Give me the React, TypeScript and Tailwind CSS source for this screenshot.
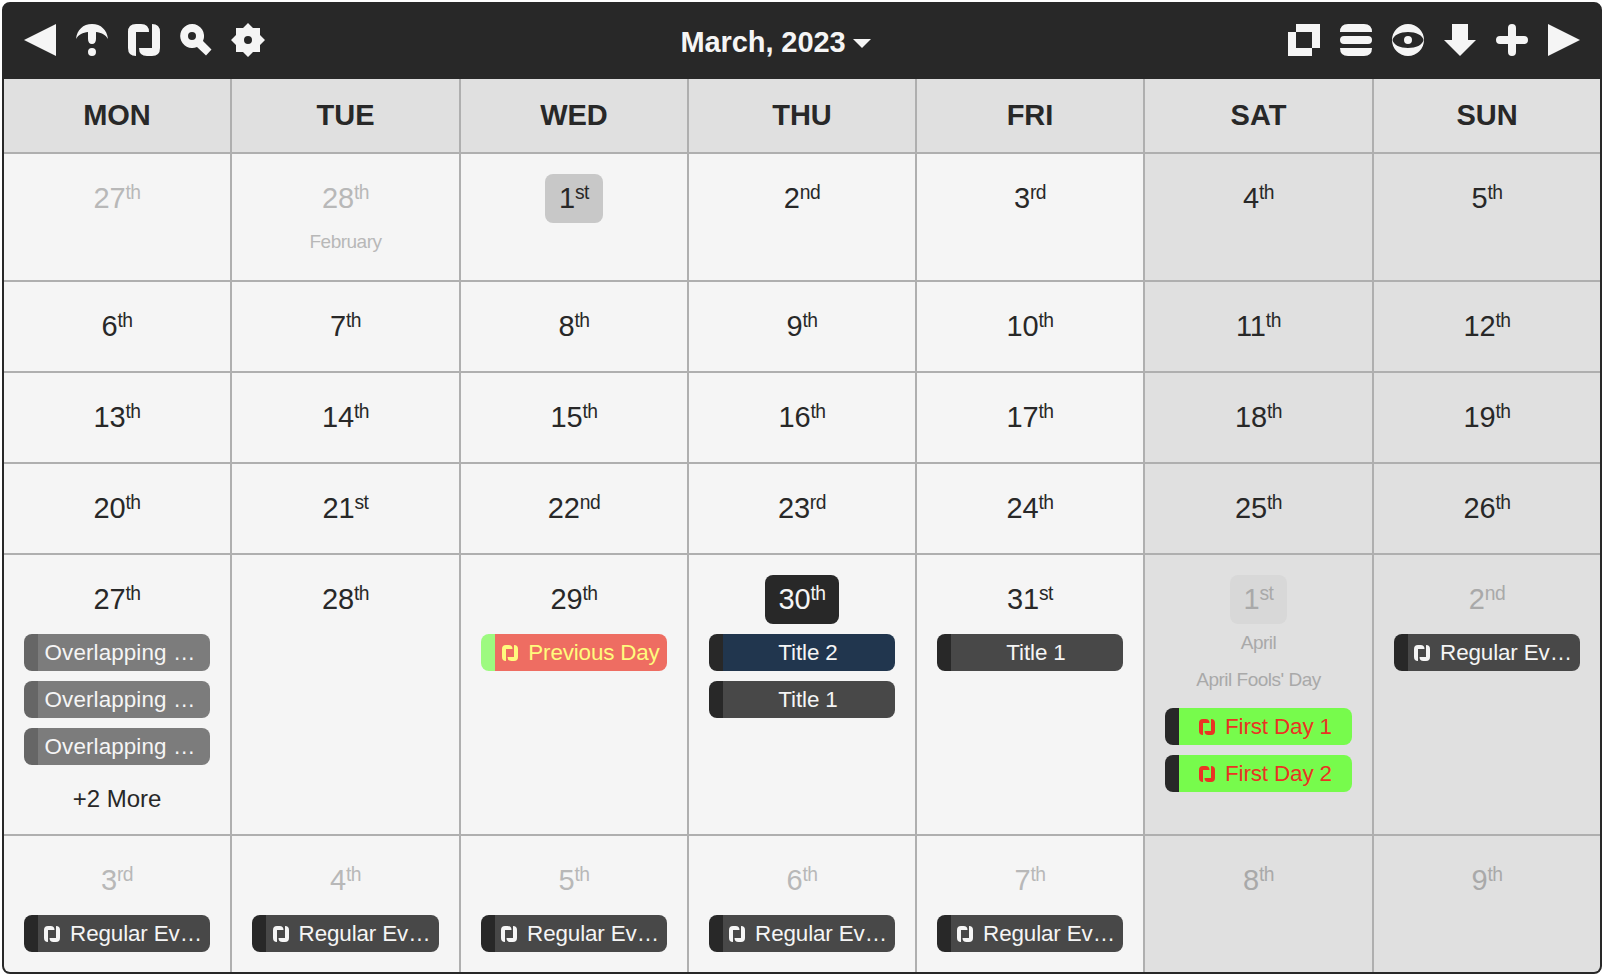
import type { ReactNode } from "react";

const BACK = "M32 0V32L0 16Z";
const FORWARD = "M0 0V32L32 16Z";
const SYNC =
  "M8 0H13Q21 0 21 8H8V32Q0 32 0 24V8Q0 0 8 0ZM24 32H19Q11 32 11 24H24V0Q32 0 32 8V24Q32 32 24 32Z";
const COPY = "M8 0H32V24H24V8H8ZM0 8H8V24H24V32H0Z";
const MENU =
  "M8 0H24Q32 0 32 8H0Q0 0 8 0ZM4 12H28A4 4 0 0 1 28 20H4A4 4 0 0 1 4 12ZM0 24H32Q32 32 24 32H8Q0 32 0 24Z";
const DOWN = "M8 0H24V16H32L16 32L0 16H8Z";
const PLUS =
  "M12 4A4 4 0 0 1 20 4V12H28A4 4 0 0 1 28 20H20V28A4 4 0 0 1 12 28V20H4A4 4 0 0 1 4 12H12Z";
const TODAY =
  "M0 15C1 6 7 0 16 0S31 6 32 15C29.500 10.500 25 8.500 20 8V15C20 18 18.500 20 16 20S12 18 12 15V8C7 8.500 2.500 10.500 0 15ZM16 24A4 4 0 1 1 16 32A4 4 0 1 1 16 24Z";
const SEARCH =
  "M12 0A12 12 0 0 1 23 17L31.500 25.500L26 31.500L17 23A12 12 0 1 1 12 0ZM12 8A4 4 0 1 0 12 16A4 4 0 1 0 12 8Z";
const GEAR =
  "M4 4H11L16 -1L21 4H28V11L33 16L28 21V28H21L16 33L11 28H4V21L-1 16L4 11ZM16 12A4 4 0 1 0 16 20A4 4 0 1 0 16 12Z";
const EYE =
  "M16 0A16 16 0 1 1 16 32A16 16 0 1 1 16 0ZM0.500 16C1.500 11 8 8 16 8S30.500 11 31.500 16C30.500 21 24 24 16 24S1.500 21 0.500 16ZM16 12A4 4 0 1 1 16 20A4 4 0 1 1 16 12Z";

function Icon({ d, className = "size-8" }: { d: string; className?: string }) {
  return (
    <svg viewBox="0 0 32 32" className={`${className} shrink-0 overflow-visible`} fill="currentColor" fillRule="evenodd">
      <path d={d} />
    </svg>
  );
}

type Kind = "overlap" | "regular" | "title2" | "previous" | "first";
type Event = { kind: Kind; text: string; sync?: boolean };
type Day = {
  n: number;
  muted?: boolean;
  badge?: "today" | "first" | "firstMuted";
  notes?: string[];
  events?: Event[];
  more?: string;
};

const kindStyle: Record<Kind, string> = {
  overlap: "bg-[#7c7c7c] border-[#666666] text-[#f5f5f5] pr-2 tracking-[0.120px]",
  regular: "bg-[#484848] border-[#282828] text-[#f5f5f5] pr-0.5 tracking-[-0.120px]",
  title2: "bg-[#21364e] border-[#282828] text-[#f5f5f5] pr-0.5 tracking-[-0.120px]",
  previous: "bg-[#ee6d62] border-[#9dfa80] text-[#fffb7d] tracking-[-0.150px]",
  first: "bg-[#77fb4c] border-[#282828] text-[#ea3323] tracking-[-0.120px]",
};

const badgeStyle = {
  today: "bg-[#282828] text-[#f5f5f5]",
  first: "bg-[#c8c8c8]",
  firstMuted: "bg-[#d8d8d8]",
};

function suffix(n: number) {
  if (n > 10 && n < 14) return "th";
  return ["th", "st", "nd", "rd"][n % 10] ?? "th";
}

function EventBar({ kind, text, sync }: Event) {
  return (
    <div
      className={`flex h-[37px] items-center justify-center rounded-lg border-l-14 text-[22.400px] leading-[36px] whitespace-pre ${kindStyle[kind]}`}
    >
      {sync && <Icon d={SYNC} className="mr-2.5 size-4" />}
      <span>{text}</span>
    </div>
  );
}

function DayCell({ day, weekend, lastCol, lastRow }: { day: Day; weekend: boolean; lastCol: boolean; lastRow: boolean }) {
  const tone = day.muted ? (weekend ? "text-[#a9a9a9]" : "text-[#b8b8b8]") : "text-[#282828]";
  return (
    <div
      className={`flex min-w-0 flex-col border-[#afafaf] px-5 pt-5 ${lastCol ? "" : "border-r-2"} ${lastRow ? "" : "border-b-2"} ${
        weekend ? "bg-[#e0e0e0]" : "bg-[#f5f5f5]"
      } ${tone}`}
    >
      <div
        className={`flex h-[49px] shrink-0 justify-center self-center rounded-lg px-3.5 text-[29px] leading-[48px] tracking-[-0.200px] ${
          day.badge ? badgeStyle[day.badge] : ""
        }`}
      >
        <span>{day.n}</span>
        <span className="text-[19.300px] leading-[37px] tracking-[-0.500px]">{suffix(day.n)}</span>
      </div>
      {day.notes?.map((note) => (
        <div
          key={note}
          className="h-[37px] shrink-0 text-center text-[19px] leading-[37px] tracking-[-0.500px] whitespace-nowrap"
        >
          {note}
        </div>
      ))}
      {day.events && (
        <div className="mt-2.5 flex flex-col gap-2.5">
          {day.events.map((event, i) => (
            <EventBar key={i} {...event} />
          ))}
        </div>
      )}
      {day.more && <div className="mt-4 text-center text-[24px] leading-9">{day.more}</div>}
    </div>
  );
}

const overlap: Event = { kind: "overlap", text: "Overlapping …" };
const regular: Event = { kind: "regular", text: "Regular Ev…", sync: true };
const title1: Event = { kind: "regular", text: "Title 1" };

const march = (from: number, to: number): Day[] =>
  Array.from({ length: to - from + 1 }, (_, i) => ({ n: from + i }));

const days: Day[] = [
  { n: 27, muted: true },
  { n: 28, muted: true, notes: ["February"] },
  { n: 1, badge: "first" },
  ...march(2, 26),
  { n: 27, events: [overlap, overlap, overlap], more: "+2 More" },
  { n: 28 },
  { n: 29, events: [{ kind: "previous", text: "Previous Day", sync: true }] },
  { n: 30, badge: "today", events: [{ kind: "title2", text: "Title 2" }, title1] },
  { n: 31, events: [title1] },
  {
    n: 1,
    muted: true,
    badge: "firstMuted",
    notes: ["April", "April Fools' Day"],
    events: [
      { kind: "first", text: "First Day 1", sync: true },
      { kind: "first", text: "First Day 2", sync: true },
    ],
  },
  { n: 2, muted: true, events: [regular] },
  { n: 3, muted: true, events: [regular] },
  { n: 4, muted: true, events: [regular] },
  { n: 5, muted: true, events: [regular] },
  { n: 6, muted: true, events: [regular] },
  { n: 7, muted: true, events: [regular] },
  { n: 8, muted: true },
  { n: 9, muted: true },
];

const weekdays = ["MON", "TUE", "WED", "THU", "FRI", "SAT", "SUN"];

function Toolbar({ children }: { children: ReactNode }) {
  return <div className="flex flex-1 gap-5 last:justify-end">{children}</div>;
}

export default function App() {
  return (
    <div className="h-[976px] w-[1604px] bg-white p-0.5 font-['Liberation_Sans',Arial,sans-serif]">
      <div className="flex h-[972px] w-[1600px] flex-col overflow-hidden rounded-lg border-2 border-[#282828] bg-[#282828]">
        <header className="flex h-[75px] shrink-0 items-center px-5 pb-[3px] text-[#f5f5f5]">
          <Toolbar>
            <Icon d={BACK} />
            <Icon d={TODAY} />
            <Icon d={SYNC} />
            <Icon d={SEARCH} />
            <Icon d={GEAR} />
          </Toolbar>
          <div className="mr-[52px] flex items-center gap-2 pt-1">
            <span className="text-[29px] leading-8 font-bold tracking-[-0.100px]">March, 2023</span>
            <svg viewBox="0 0 18 9" className="mt-[3px] h-[9px] w-[18px]" fill="currentColor">
              <path d="M0 0H18L9 9Z" />
            </svg>
          </div>
          <Toolbar>
            <Icon d={COPY} />
            <Icon d={MENU} />
            <Icon d={EYE} />
            <Icon d={DOWN} />
            <Icon d={PLUS} />
            <Icon d={FORWARD} />
          </Toolbar>
        </header>
        <div className="grid grid-cols-[228px_229px_228px_228px_228px_229px_226px] grid-rows-[75px_128px_91px_91px_91px_281px_136px]">
          {weekdays.map((name, i) => (
            <div
              key={name}
              className={`border-b-2 border-[#afafaf] bg-[#e0e0e0] text-center text-[29px] leading-[73px] font-bold text-[#282828] ${
                i < 6 ? "border-r-2" : ""
              }`}
            >
              {name}
            </div>
          ))}
          {days.map((day, i) => (
            <DayCell key={i} day={day} weekend={i % 7 > 4} lastCol={i % 7 === 6} lastRow={i >= 35} />
          ))}
        </div>
      </div>
    </div>
  );
}
